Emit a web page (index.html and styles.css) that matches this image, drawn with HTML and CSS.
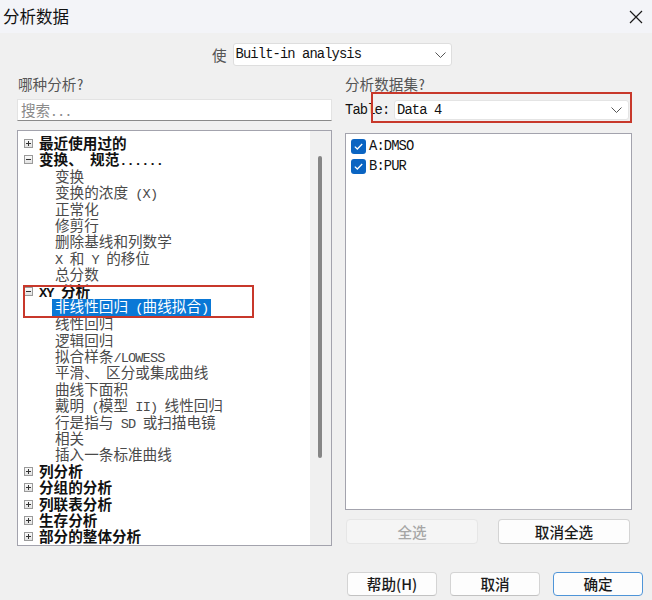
FILE: index.html
```html
<!DOCTYPE html>
<html lang="zh-CN">
<head>
<meta charset="utf-8">
<title>分析数据</title>
<link rel="stylesheet" href="styles.css">
</head>
<body>
<div class="dialog">
  <div class="titlebar">
    <span class="title">分析数据</span>
    <svg class="close" width="14" height="14" viewBox="0 0 14 14"><path d="M1 1L13 13M13 1L1 13" stroke="#1a1a1a" stroke-width="1.2" fill="none"/></svg>
  </div>
  <div class="body">
    <div class="userow">
      <span class="lbl">使</span>
      <div class="combo wide">
        <span class="mono">Built-in analysis</span>
        <svg class="chev" width="11" height="6" viewBox="0 0 11 6"><path d="M0.5 0.5L5.5 5.5L10.5 0.5" stroke="#555" stroke-width="1" fill="none"/></svg>
      </div>
    </div>
    <div class="columns">
      <div class="leftcol">
        <div class="lbl">哪种分析?</div>
        <div class="search">搜索...</div>
        <div class="tree">
          <div class="tree-list">
            <div class="node top"><span class="exp plus"></span>最近使用过的</div>
            <div class="node top"><span class="exp"></span>变换、<span class="lat"> </span>规范<span class="lat">......</span></div>
            <div class="node child">变换</div>
            <div class="node child">变换的浓度<span class="lat"> (X)</span></div>
            <div class="node child">正常化</div>
            <div class="node child">修剪行</div>
            <div class="node child">删除基线和列数学</div>
            <div class="node child"><span class="lat">X </span>和<span class="lat"> Y </span>的移位</div>
            <div class="node child">总分数</div>
            <div class="node top"><span class="exp"></span><span class="lat">XY </span>分析</div>
            <div class="node child"><span class="sel">非线性回归<span class="lat"> (</span>曲线拟合<span class="lat">)</span></span></div>
            <div class="node child">线性回归</div>
            <div class="node child">逻辑回归</div>
            <div class="node child">拟合样条<span class="lat">/LOWESS</span></div>
            <div class="node child">平滑、<span class="lat"> </span>区分或集成曲线</div>
            <div class="node child">曲线下面积</div>
            <div class="node child">戴明<span class="lat"> (</span>模型<span class="lat"> II) </span>线性回归</div>
            <div class="node child">行是指与<span class="lat"> SD </span>或扫描电镜</div>
            <div class="node child">相关</div>
            <div class="node child">插入一条标准曲线</div>
            <div class="node top"><span class="exp plus"></span>列分析</div>
            <div class="node top"><span class="exp plus"></span>分组的分析</div>
            <div class="node top"><span class="exp plus"></span>列联表分析</div>
            <div class="node top"><span class="exp plus"></span>生存分析</div>
            <div class="node top"><span class="exp plus"></span>部分的整体分析</div>
          </div>
          <div class="vscroll"><div class="thumb"></div></div>
          <div class="annot annot-left"></div>
        </div>
      </div>
      <div class="rightcol">
        <div class="lbl">分析数据集?</div>
        <div class="tablerow">
          <span class="mono">Table:</span>
          <div class="combo data">
            <span class="mono">Data 4</span>
            <svg class="chev" width="11" height="6" viewBox="0 0 11 6"><path d="M0.5 0.5L5.5 5.5L10.5 0.5" stroke="#555" stroke-width="1" fill="none"/></svg>
          </div>
          <div class="annot annot-right"></div>
        </div>
        <div class="sheetlist">
          <div class="chk-row"><span class="chk"><svg width="15" height="15" viewBox="0 0 15 15"><path d="M3.8 7.6L6.3 10L11.2 5" stroke="#fff" stroke-width="1.3" fill="none"/></svg></span><span class="mono">A:DMSO</span></div>
          <div class="chk-row"><span class="chk"><svg width="15" height="15" viewBox="0 0 15 15"><path d="M3.8 7.6L6.3 10L11.2 5" stroke="#fff" stroke-width="1.3" fill="none"/></svg></span><span class="mono">B:PUR</span></div>
        </div>
        <div class="btnrow">
          <button class="btn wide-btn" disabled>全选</button>
          <button class="btn wide-btn">取消全选</button>
        </div>
      </div>
    </div>
    <div class="footer">
      <button class="btn foot-btn">帮助(H)</button>
      <button class="btn foot-btn">取消</button>
      <button class="btn foot-btn default">确定</button>
    </div>
  </div>
</div>
</body>
</html>
```
FILE: styles.css
```css
html, body {
  margin: 0;
  padding: 0;
}
body {
  width: 652px;
  height: 600px;
  overflow: hidden;
  background: #f0f0f0;
  font-family: "Noto Sans Mono CJK SC", "Noto Sans CJK SC", sans-serif;
  color: #222;
}
.dialog {
  width: 652px;
  height: 600px;
  display: flex;
  flex-direction: column;
}
.titlebar {
  height: 33px;
  background: #f3f4f8;
  display: flex;
  align-items: center;
  justify-content: space-between;
  padding: 0 9px 0 3px;
  box-sizing: border-box;
}
.title {
  font-family: "Noto Sans CJK SC", sans-serif;
  font-size: 16.5px;
  color: #111;
  line-height: 20px;
  margin-top: -1px;
}
.close {
  margin-top: 1px;
}
.body {
  display: flex;
  flex-direction: column;
}
.mono {
  font-family: "Liberation Mono", monospace;
  font-size: 13.8px;
  letter-spacing: -0.9px;
  color: #111;
}
.lbl {
  font-size: 14.6px;
  line-height: 18px;
  color: #555;
}
.userow {
  margin-top: 10px;
  display: flex;
  align-items: center;
  padding-left: 212px;
  gap: 6px;
  height: 23px;
}
.combo {
  background: #fff;
  border: 1px solid #dedede;
  border-radius: 3px;
  box-sizing: border-box;
  display: flex;
  align-items: center;
  justify-content: space-between;
  padding: 0 5px 0 2px;
}
.combo.wide {
  width: 219px;
  height: 23px;
}
.combo.data {
  width: 235px;
  height: 20px;
  border-color: #e4e4e4;
  padding-left: 2px;
  padding-right: 6px;
}
.columns {
  display: flex;
  gap: 13px;
  padding-left: 17px;
  margin-top: 9px;
}
.leftcol {
  width: 315px;
  display: flex;
  flex-direction: column;
}
.leftcol .lbl {
  padding-left: 1px;
}
.search {
  margin-top: 6px;
  height: 22px;
  background: #fff;
  border: 1px solid #e3e3e3;
  border-bottom-color: #8a8a8a;
  box-sizing: border-box;
  font-size: 14.6px;
  line-height: 20px;
  color: #8a8a8a;
  padding-left: 3px;
}
.tree {
  position: relative;
  margin-top: 9px;
  height: 416px;
  background: #fff;
  border: 1px solid #a3a3ad;
  box-sizing: border-box;
  display: flex;
}
.tree-list {
  flex: 1;
  padding-top: 5px;
}
.node {
  height: 16.4px;
  line-height: 16.4px;
  white-space: nowrap;
  font-family: "Liberation Serif", "Noto Sans CJK SC", serif;
  font-size: 14.6px;
}
.node.top {
  font-weight: 700;
  color: #111;
  padding-left: 6px;
}
.node.child {
  color: #4a4a4a;
  padding-left: 37px;
}
.lat {
  font-family: "Liberation Mono", monospace;
  font-size: 13.6px;
  letter-spacing: -0.85px;
  white-space: pre;
}
.exp {
  display: inline-block;
  vertical-align: top;
  margin-top: 3px;
  width: 9px;
  height: 9px;
  box-sizing: border-box;
  border: 1px solid #9a9a9a;
  background: linear-gradient(#fafafa, #e2e2e2);
  margin-right: 6px;
  position: relative;
}
.exp::before {
  content: "";
  position: absolute;
  left: 1px;
  top: 3px;
  width: 5px;
  height: 1px;
  background: #333;
}
.exp.plus::after {
  content: "";
  position: absolute;
  left: 3px;
  top: 1px;
  width: 1px;
  height: 5px;
  background: #333;
}
.sel {
  display: inline-block;
  vertical-align: top;
  margin-top: -1px;
  background: #0a78d6;
  color: #fff;
  height: 17px;
  line-height: 17.4px;
  padding: 0 3px 0 3px;
  margin-left: -3px;
}
.vscroll {
  width: 21px;
  background: #f0f0f0;
  flex: none;
}
.thumb {
  margin-top: 25px;
  margin-left: 8px;
  width: 4px;
  height: 302px;
  border-radius: 2px;
  background: #868686;
}
.annot {
  position: absolute;
  border: 2px solid #c8382b;
  box-sizing: border-box;
  pointer-events: none;
}
.annot-left {
  left: 5px;
  top: 154px;
  width: 231px;
  height: 33px;
}
.rightcol {
  width: 287px;
  display: flex;
  flex-direction: column;
}
.tablerow {
  position: relative;
  margin-top: 7px;
  height: 20px;
  display: flex;
  align-items: center;
  justify-content: space-between;
  padding-right: 3px;
}
.annot-right {
  left: 26px;
  top: -8px;
  width: 261px;
  height: 31px;
}
.sheetlist {
  margin-top: 13px;
  height: 377px;
  background: #fff;
  border: 1px solid #a3a3ad;
  box-sizing: border-box;
  padding: 2px 0 0 5px;
}
.chk-row {
  height: 20px;
  display: flex;
  align-items: center;
  gap: 3px;
}
.chk {
  width: 15px;
  height: 15px;
  border-radius: 3px;
  background: #0a64c2;
  display: block;
}
.chk svg {
  display: block;
}
.btnrow {
  margin-top: 9px;
  display: flex;
  gap: 20px;
  padding-left: 1px;
}
.btn {
  font-family: "Noto Sans CJK SC", sans-serif;
  font-size: 14.6px;
  font-weight: 500;
  color: #1a1a1a;
  background: #fdfdfd;
  border: 1px solid #d4d4d4;
  border-bottom-color: #c2c2c2;
  border-radius: 4px;
  box-sizing: border-box;
  padding: 0;
  line-height: 20px;
}
.btn:disabled {
  background: #f5f5f5;
  border-color: #e6e6e6;
  color: #a6a6a6;
}
.wide-btn {
  width: 132px;
  height: 25px;
}
.footer {
  margin-top: 26px;
  display: flex;
  justify-content: flex-end;
  gap: 13px;
  padding-right: 9px;
}
.foot-btn {
  width: 90px;
  height: 24px;
}
.foot-btn.default {
  border: 1px solid #4f95d8;
}
```
